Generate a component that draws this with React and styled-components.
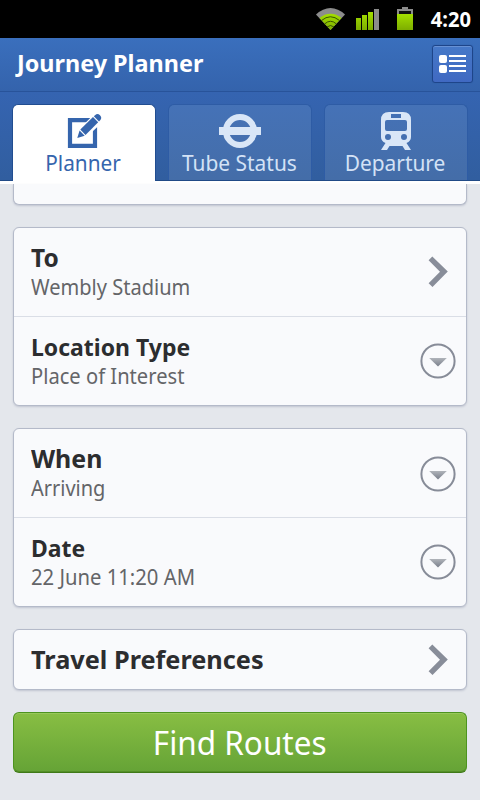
import React from "react";
import styled, { createGlobalStyle } from "styled-components";

const GlobalStyle = createGlobalStyle`
  *, *::before, *::after { box-sizing: border-box; }
  body { margin: 0; background: #e4e7ec; }
`;

const Screen = styled.div`
  width: 480px;
  height: 800px;
  overflow: hidden;
  display: flex;
  flex-direction: column;
  background: #e4e7ec;
  font-family: "Noto Sans", sans-serif;
`;

const Text = styled.span`
  display: block;
  width: max-content;
  white-space: nowrap;
  font-size: ${(p) => p.$size}px;
  font-weight: ${(p) => (p.$bold ? 700 : 400)};
  line-height: ${(p) => p.$line}px;
  margin-bottom: ${(p) => p.$below || 0}px;
  transform: scaleX(${(p) => p.$fit || 1});
  transform-origin: ${(p) => p.$origin || "left"} center;
  color: ${(p) => p.$color};
`;

const StatusBar = styled.div`
  flex: none;
  height: 38px;
  background: #000;
  display: flex;
  align-items: flex-start;
  justify-content: flex-end;
  padding-right: 9px;
`;

const StatusIcons = styled.svg`
  flex: none;
  width: 110px;
  height: 38px;
  margin-right: 9px;
`;

const Clock = styled(Text)`
  margin-top: 5px;
`;

const Top = styled.header`
  flex: none;
  height: 143px;
  display: flex;
  flex-direction: column;
  background: linear-gradient(#3a6fbd 0, #3463ac 53px, #3564b1 54px, #315e9f 100%);
  border-bottom: 1px solid #204a86;
`;

const TitleBar = styled.div`
  flex: none;
  height: 54px;
  border-bottom: 1px solid #28539a;
  display: flex;
  justify-content: space-between;
  padding: 7px 7px 0 17px;
`;

const PageTitle = styled(Text)`
  margin-top: 2px;
`;

const ListButton = styled.button`
  width: 41px;
  height: 38px;
  padding: 0;
  border: 1px solid #1e458a;
  border-radius: 3px;
  background: linear-gradient(#4679c8, #4069c2);
  box-shadow: inset 0 1px 0 #6791d4, 0 0 1px #24509a;
  display: flex;
  svg { display: block; }
`;

const Tabs = styled.nav`
  flex: 1;
  display: grid;
  grid-template-columns: repeat(3, 144px);
  gap: 12px;
  padding: 12px 12px 0;
`;

const Tab = styled.div`
  display: flex;
  flex-direction: column;
  align-items: center;
  border: 1px solid ${(p) => (p.$active ? "#214d90" : "#2e5ca5")};
  border-bottom: 0;
  border-radius: 6px 6px 0 0;
  margin-bottom: ${(p) => (p.$active ? -1 : 0)}px;
  background: ${(p) => (p.$active ? "#fff" : "linear-gradient(#4572b7, #446da8)")};
  svg { display: block; flex: none; overflow: visible; }
`;

const TabLabel = styled(Text)`
  margin-right: ${(p) => (p.$active ? 2 : 1)}px;
`;

const Strip = styled.div`
  flex: none;
  height: 3px;
  background: #fff;
`;

const Content = styled.main`
  flex: 1;
  min-height: 0;
  display: flex;
  flex-direction: column;
  gap: 22px;
  padding: 0 13px;
`;

const Panel = styled.section`
  flex: none;
  background: #f9fafc;
  border: 1px solid #b4bac9;
  border-radius: 6px;
  box-shadow: 0 1px 2px rgba(90, 100, 130, 0.25);
`;

const PanelTail = styled(Panel)`
  height: 21px;
  border-top: 0;
  border-radius: 0 0 6px 6px;
`;

const Row = styled.div`
  height: ${(p) => p.$height || 88}px;
  display: flex;
  align-items: center;
  justify-content: space-between;
  padding: 0 10px 0 17px;
  & + & { border-top: 1px solid #dadee6; height: 89px; }
  svg { display: block; flex: none; }
`;

const Action = styled.button`
  flex: none;
  height: 61px;
  padding: 1px 1px 0 0;
  border: 1px solid #4d941f;
  border-bottom-color: #3f7a18;
  border-radius: 6px;
  background: linear-gradient(#88be43, #65a336);
  box-shadow: inset 0 1px 0 #98c75a, inset 0 -1px 0 #548f28;
  display: flex;
  align-items: center;
  justify-content: center;
  font-family: inherit;
`;

const Chevron = () => (
  <svg width="36" height="36" viewBox="0 0 36 36">
    <path d="M8.600 6.300L12.300 2.500 27.800 17.600 12.500 33 8.600 29.200 20 17.700Z" fill="#888d99" />
  </svg>
);

const DropIcon = ({ drop = 0 }) => (
  <svg width="36" height="36" viewBox={`0 ${-drop} 36 36`} overflow="visible">
    <defs>
      <linearGradient id="drop" x1="0" y1="0" x2="0" y2="1">
        <stop offset="0" stopColor="#b0b4ba" />
        <stop offset="1" stopColor="#777d89" />
      </linearGradient>
    </defs>
    <circle cx="18" cy="18" r="16.6" fill="none" stroke="#878c98" strokeWidth="2" />
    <path d="M9.200 15H26.800L18 23.600Z" fill="url(#drop)" />
  </svg>
);

const PlannerIcon = () => (
  <svg width="40" height="42" viewBox="0 0 40 42">
    <path d="M6 15.100H31V40.900H6Z" fill="none" stroke="#3565ad" strokeWidth="4.200" />
    <path d="M13 33.500L15.500 25 30.500 10 37.500 17 22 31.500Z" fill="#fff" stroke="#fff" strokeWidth="1.600" />
    <path d="M13.300 33L15.600 25.600 20.700 30.700Z" fill="#3565ad" />
    <path d="M16.300 24.600L29 12.100 34.200 17.300 21.500 29.900Z" fill="#3565ad" />
    <path d="M29.800 11.300L31.300 9.900Q33.500 7.900 36 10.300 38.300 12.800 36.400 15L35 16.500Z" fill="#3565ad" />
  </svg>
);

const TubeIcon = () => (
  <svg width="44" height="42" viewBox="0 0 44 42">
    <circle cx="22" cy="26" r="14" fill="none" stroke="#d9e6f7" strokeWidth="6.200" />
    <path d="M1 22H43V30H1Z" fill="#d9e6f7" />
  </svg>
);

const TrainIcon = () => (
  <svg width="34" height="42" viewBox="0 -1 34 42">
    <path
      fillRule="evenodd"
      fill="#d9e6f7"
      d="M10 6H24Q32 6 32 14V31Q32 35 27.500 37L32 44H26L23.500 40H10.500L8 44H2L6.500 37Q2 35 2 31V14Q2 6 10 6Z
      M12 8V12H22V8Z M8 14Q6 14 6 16V23Q6 25 8 25H26Q28 25 28 23V16Q28 14 26 14Z
      M9 28A3 3 0 1 0 9 34A3 3 0 1 0 9 28Z M25 28A3 3 0 1 0 25 34A3 3 0 1 0 25 28Z"
    />
  </svg>
);

const IndicatorIcons = () => (
  <StatusIcons viewBox="311 0 110 38">
    <defs>
      <linearGradient id="lime" x1="0" y1="0" x2="0" y2="1">
        <stop offset="0" stopColor="#a3df00" />
        <stop offset="1" stopColor="#7dad00" />
      </linearGradient>
    </defs>
    <path d="M330.500 30L316 14.500Q323 8 330.500 8T345 14.500Z" fill="#8c8c8c" />
    <path d="M330.500 30L319.500 18Q324.500 13.700 330.500 13.700T341.500 18Z" fill="url(#lime)" />
    <path d="M321.500 20.500Q330.500 13 339.500 20.500M324.500 24Q330.500 18.500 336.500 24M327 27Q330.500 24 334 27" fill="none" stroke="#2f4400" strokeWidth="0.900" />
    <path d="M356 18H361V30H356ZM362 15H367V30H362ZM368 12H373V30H368Z" fill="url(#lime)" />
    <path d="M374 9H379V30H374Z" fill="#8c8c8c" />
    <path d="M397 9H402V7H408V9H413V15H397Z" fill="#8c8c8c" />
    <path d="M399 11H411V14H399Z" fill="#111" />
    <path d="M397 14H413V30H397Z" fill="url(#lime)" />
  </StatusIcons>
);

const Field = ({ title, value, large, fit, valueFit, icon }) => (
  <Row>
    <div>
      <Text
        $size={large ? 25.5 : 24}
        $line={large ? 28 : 30}
        $below={large ? 2 : 0}
        $bold
        $fit={fit}
        $color="#2c2d2f"
      >
        {title}
      </Text>
      <Text $size={21.5} $line={28} $fit={valueFit} $color="#646568">{value}</Text>
    </div>
    {icon}
  </Row>
);

export default function App() {
  return (
    <Screen>
      <GlobalStyle />
      <StatusBar>
        <IndicatorIcons />
        <Clock $size={20.5} $line={29} $bold $fit={0.98} $color="#fff" $origin="right">4:20</Clock>
      </StatusBar>
      <Top>
        <TitleBar>
          <PageTitle $size={24} $line={32} $bold $fit={0.974} $color="#fff">Journey Planner</PageTitle>
          <ListButton aria-label="Menu">
            <svg width="39" height="36" viewBox="0 0 39 36">
              <rect x="6" y="9" width="8" height="8" rx="2" fill="#fff" />
              <rect x="6" y="19" width="8" height="8" rx="2" fill="#fff" />
              <path d="M16 10H33M16 15H33M16 20H33M16 25H33" stroke="#fff" strokeWidth="2" />
            </svg>
          </ListButton>
        </TitleBar>
        <Tabs>
          <Tab $active>
            <PlannerIcon />
            <TabLabel $active $size={22} $line={30} $fit={0.945} $color="#3565ad" $origin="center">Planner</TabLabel>
          </Tab>
          <Tab>
            <TubeIcon />
            <TabLabel $size={22} $line={30} $fit={0.95} $color="#d3e2f6" $origin="center">Tube Status</TabLabel>
          </Tab>
          <Tab>
            <TrainIcon />
            <TabLabel $size={22} $line={30} $fit={0.95} $color="#d3e2f6" $origin="center">Departure</TabLabel>
          </Tab>
        </Tabs>
      </Top>
      <Strip />
      <Content>
        <PanelTail />
        <Panel>
          <Field title="To" value="Wembly Stadium" large fit={0.96} valueFit={0.932} icon={<Chevron />} />
          <Field title="Location Type" value="Place of Interest" fit={0.958} valueFit={0.937} icon={<DropIcon />} />
        </Panel>
        <Panel>
          <Field title="When" value="Arriving" large fit={0.978} valueFit={0.93} icon={<DropIcon drop={1} />} />
          <Field title="Date" value="22 June 11:20 AM" fit={0.955} valueFit={0.942} icon={<DropIcon />} />
        </Panel>
        <Panel>
          <Row $height={59}>
            <Text $size={25.5} $line={34} $below={2} $bold $fit={0.992} $color="#2c2d2f">Travel Preferences</Text>
            <Chevron />
          </Row>
        </Panel>
        <Action>
          <Text $size={32.5} $line={44} $fit={0.968} $color="#fff" $origin="center">Find Routes</Text>
        </Action>
      </Content>
    </Screen>
  );
}
